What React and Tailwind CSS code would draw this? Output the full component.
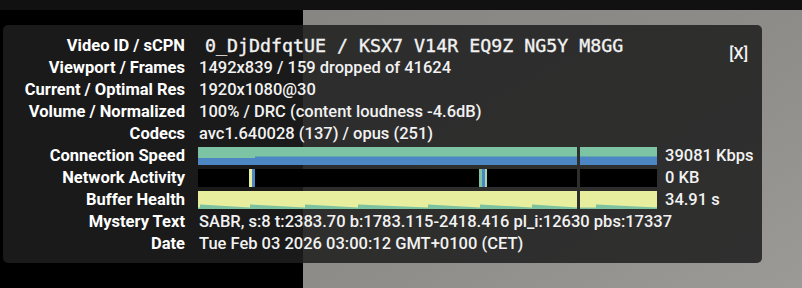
import React from "react"

const TEAL = "#7dc4a5"
const BLUE = "#4c86c3"
const YELLOW = "#e7ef9f"

const infoRows = [
  ["Viewport / Frames", "1492x839 / 159 dropped of 41624"],
  ["Current / Optimal Res", "1920x1080@30"],
  ["Volume / Normalized", "100% / DRC (content loudness -4.6dB)"],
  ["Codecs", "avc1.640028 (137) / opus (251)"],
]

const tailRows = [
  ["Mystery Text", "SABR, s:8 t:2383.70 b:1783.115-2418.416 pl_i:12630 pbs:17337"],
  ["Date", "Tue Feb 03 2026 03:00:12 GMT+0100 (CET)"],
]

function sawtooth(width, spikes) {
  // sharp rise, slow decay, along the bottom of the buffer chart
  let d = `M0 18 L0 16.5`
  spikes.forEach((s, i) => {
    const next = spikes[i + 1] ?? width
    d += ` L${s} 16.5 L${s} 13.5 L${next} 16.5`
  })
  d += ` L${width} 16.5 L${width} 18 Z`
  return d
}

function Label({ children }) {
  return (
    <div className="w-[182px] shrink-0 text-right text-[16.5px] leading-[22px] font-bold text-white">
      {children}
    </div>
  )
}

function Value({ children }) {
  return (
    <div className="ml-[14px] whitespace-nowrap text-[16.5px] leading-[22px] font-medium text-[#f2f2f2]">
      {children}
    </div>
  )
}

function ChartRow({ label, value, first, second }) {
  return (
    <div className="flex h-[22px] items-center">
      <Label>{label}</Label>
      <div className="ml-[13px] flex gap-[3px]">
        <svg width="379" height="18" className="block">
          {first}
        </svg>
        <svg width="77" height="18" className="block">
          {second}
        </svg>
      </div>
      <div className="ml-[8px] text-[16.5px] leading-[22px] font-medium text-[#f2f2f2]">{value}</div>
    </div>
  )
}

export default function App() {
  return (
    <div className="relative h-[288px] w-[802px] overflow-hidden bg-black font-['Roboto',sans-serif]">
      <div className="h-[10px] bg-[#111]" />
      <div className="flex h-[278px]">
        <div className="w-[303px] bg-black" />
        <div className="flex-1 bg-gradient-to-br from-[#878682] via-[#8d8c88] to-[#9b9a96]" />
      </div>

      <div className="absolute left-[3px] top-[25px] w-[759px] rounded-[5px] bg-[rgba(30,30,30,0.86)] pt-[9px] pb-[8px]">
        <div className="flex h-[23px] items-center">
          <Label>Video ID / sCPN</Label>
          <div className="ml-[20px] whitespace-nowrap font-['DejaVu_Sans_Mono',monospace] text-[18.3px] text-[#f2f2f2] [-webkit-text-stroke:0.35px_#f2f2f2]">
            0_DjDdfqtUE / KSX7 V14R EQ9Z NG5Y M8GG
          </div>
        </div>

        {infoRows.map(([label, value]) => (
          <div key={label} className="flex h-[22px] items-center">
            <Label>{label}</Label>
            <Value>{value}</Value>
          </div>
        ))}

        <ChartRow
          label="Connection Speed"
          value="39081 Kbps"
          first={
            <>
              <rect width="379" height="18" fill={TEAL} />
              <path d="M0 18 L0 11 L57 11 L57 9.5 L379 9.5 L379 18 Z" fill={BLUE} />
            </>
          }
          second={
            <>
              <rect width="77" height="18" fill={TEAL} />
              <rect y="9.5" width="77" height="8.5" fill={BLUE} />
            </>
          }
        />

        <ChartRow
          label="Network Activity"
          value="0 KB"
          first={
            <>
              <rect width="379" height="18" fill="#000" />
              <rect x="51" width="3" height="18" fill={YELLOW} />
              <rect x="54" width="3" height="18" fill={BLUE} />
              <rect x="281" width="3" height="18" fill={TEAL} />
              <rect x="284" width="3" height="18" fill={BLUE} />
              <rect x="287" width="2" height="18" fill="#a9d6b0" />
            </>
          }
          second={<rect width="77" height="18" fill="#000" />}
        />

        <ChartRow
          label="Buffer Health"
          value="34.91 s"
          first={
            <>
              <rect width="379" height="18" fill={YELLOW} />
              <path d={sawtooth(379, [2, 52, 107, 160, 230, 282, 334])} fill="#7cc2a0" />
            </>
          }
          second={
            <>
              <rect width="77" height="18" fill={YELLOW} />
              <path d={sawtooth(77, [16])} fill="#7cc2a0" />
            </>
          }
        />

        {tailRows.map(([label, value]) => (
          <div key={label} className="flex h-[22px] items-center">
            <Label>{label}</Label>
            <Value>{value}</Value>
          </div>
        ))}

        <button className="absolute right-[14px] top-[17px] text-[16px] font-medium text-[#f2f2f2]">
          [X]
        </button>
      </div>
    </div>
  )
}
